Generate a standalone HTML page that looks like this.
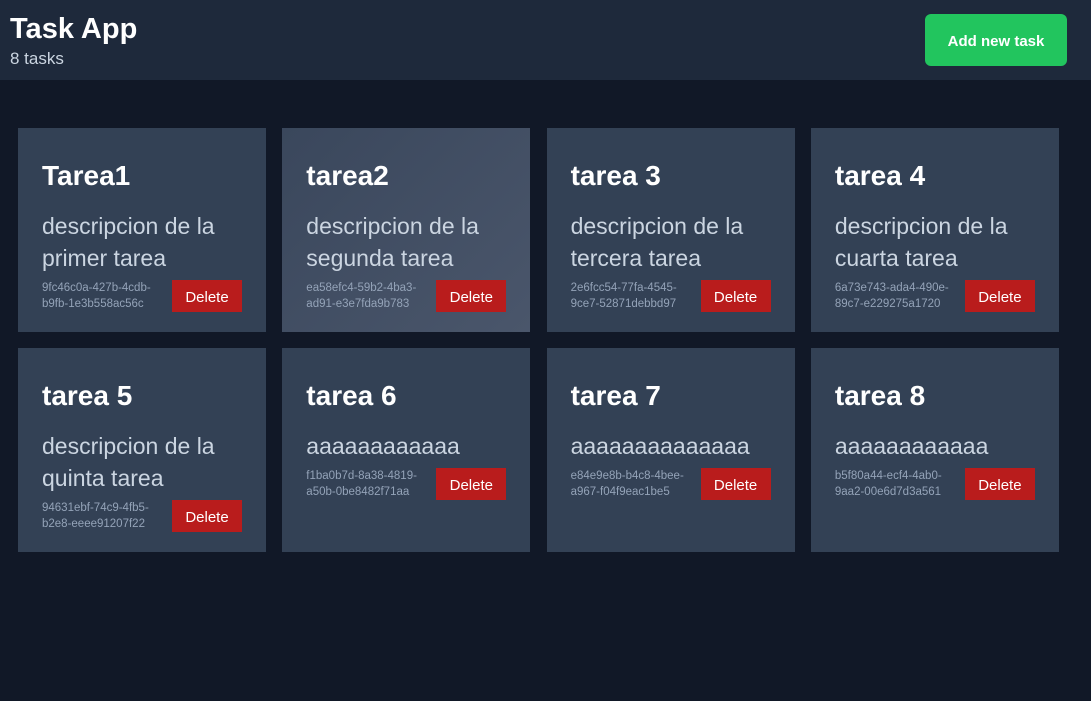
<!DOCTYPE html>
<html><head><style>
*{box-sizing:border-box;margin:0;padding:0}
body{width:1091px;height:701px;background:#111827;font-family:"Liberation Sans",sans-serif;color:#fff;overflow:hidden}
header{height:80px;background:#1e293b;position:relative}
h1{position:absolute;left:10px;top:11px;font-size:29px;line-height:36px;font-weight:bold}
.count{position:absolute;left:10px;top:49px;font-size:17px;color:#cbd5e1}
.add{position:absolute;left:925px;top:14px;width:142px;height:52px;background:#22c55e;border-radius:6px;font-weight:bold;font-size:15px;display:flex;align-items:center;justify-content:center;padding-top:3px}
.grid{position:absolute;top:128px;left:18px;display:grid;grid-template-columns:repeat(4,248px);column-gap:16.3px;row-gap:16px}
.card{background:#334155;height:204px;padding:30px 24px 0 24px}
.card.h{background:linear-gradient(135deg,#3a475c,#4a566b)}
.t{font-size:28px;font-weight:bold;line-height:36px}
.d{font-size:23px;line-height:32px;color:#cbd5e1;margin-top:16px}
.f{display:flex;justify-content:space-between;margin-top:6px;align-items:flex-start}
.id{font-size:11.5px;line-height:16px;color:#94a3b8;width:122px}
.del{width:70px;height:32px;background:#b91c1c;font-size:15px;display:flex;align-items:center;justify-content:center;padding-top:3px}
</style></head><body>
<header><h1>Task App</h1><div class="count">8 tasks</div><div class="add">Add new task</div></header>
<div class="grid">
<div class="card"><div class="t">Tarea1</div><div class="d">descripcion de la primer tarea</div><div class="f"><div class="id">9fc46c0a-427b-4cdb-b9fb-1e3b558ac56c</div><div class="del">Delete</div></div></div>
<div class="card h"><div class="t">tarea2</div><div class="d">descripcion de la segunda tarea</div><div class="f"><div class="id">ea58efc4-59b2-4ba3-ad91-e3e7fda9b783</div><div class="del">Delete</div></div></div>
<div class="card"><div class="t">tarea 3</div><div class="d">descripcion de la tercera tarea</div><div class="f"><div class="id">2e6fcc54-77fa-4545-9ce7-52871debbd97</div><div class="del">Delete</div></div></div>
<div class="card"><div class="t">tarea 4</div><div class="d">descripcion de la cuarta tarea</div><div class="f"><div class="id">6a73e743-ada4-490e-89c7-e229275a1720</div><div class="del">Delete</div></div></div>
<div class="card"><div class="t">tarea 5</div><div class="d">descripcion de la quinta tarea</div><div class="f"><div class="id">94631ebf-74c9-4fb5-b2e8-eeee91207f22</div><div class="del">Delete</div></div></div>
<div class="card"><div class="t">tarea 6</div><div class="d">aaaaaaaaaaaa</div><div class="f"><div class="id">f1ba0b7d-8a38-4819-a50b-0be8482f71aa</div><div class="del">Delete</div></div></div>
<div class="card"><div class="t">tarea 7</div><div class="d">aaaaaaaaaaaaaa</div><div class="f"><div class="id">e84e9e8b-b4c8-4bee-a967-f04f9eac1be5</div><div class="del">Delete</div></div></div>
<div class="card"><div class="t">tarea 8</div><div class="d">aaaaaaaaaaaa</div><div class="f"><div class="id">b5f80a44-ecf4-4ab0-9aa2-00e6d7d3a561</div><div class="del">Delete</div></div></div>
</div>
</body></html>
